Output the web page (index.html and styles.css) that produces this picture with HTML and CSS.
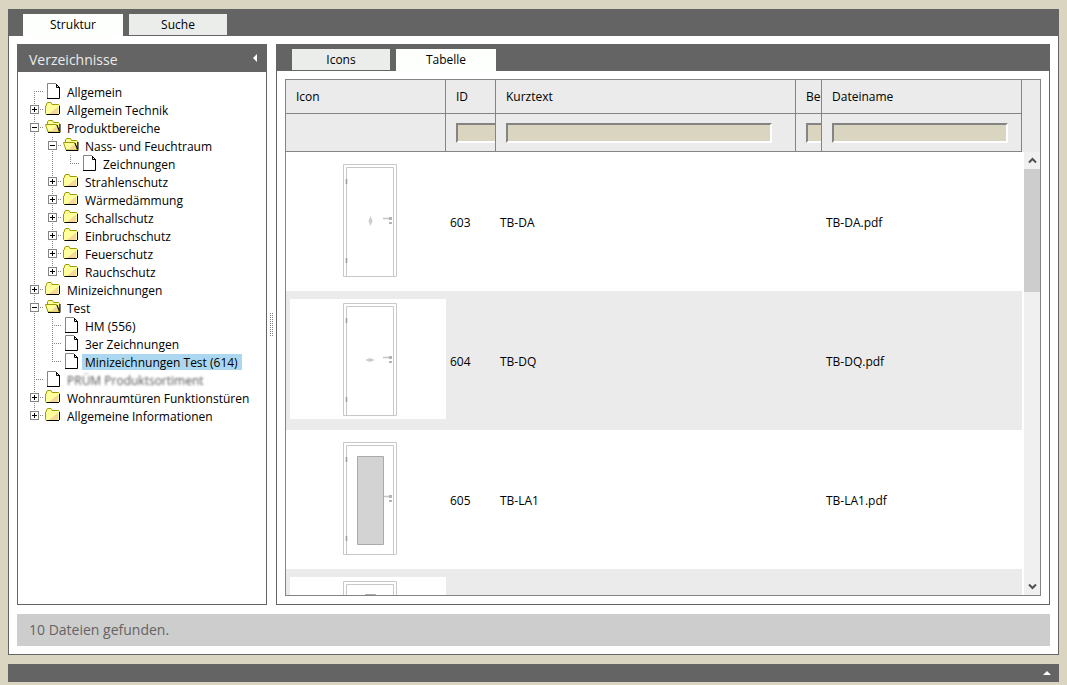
FILE: index.html
```
<!DOCTYPE html>
<html lang="de">
<head>
<meta charset="UTF-8">
<meta name="viewport" content="width=device-width, initial-scale=1.0">
<title>Verzeichnisse</title>
<link rel="stylesheet" href="styles.css">
</head>
<body>

<!-- shared drawings -->
<svg class="defs" aria-hidden="true">
  <symbol id="page" viewBox="0 0 18 18">
    <path d="M3.5 15.5V.5h8l4 4v11z" fill="#fff"/>
    <path d="M3.5 15V.5H12" fill="none" stroke="#848484"/>
    <path d="M3 15.5h12.500V4M12.500 1v3.500H15M12.500 1.500l3 3" fill="none" stroke="#000"/>
  </symbol>
  <symbol id="folder" viewBox="0 0 18 18">
    <path d="M1.500 5l1-.5V3l1-1.500h3.500L8 3v.5h6.500l1 1v8l-1 1h-12l-1-1z" fill="#ffff9c" stroke="#9c9c00"/>
    <path d="M14 5.500V12l-1 1H5z" fill="#f7d69c"/>
    <path d="M2.500 13.500H15M15.500 5v8" fill="none" stroke="#000"/>
  </symbol>
  <symbol id="folder-open" viewBox="0 0 18 18">
    <path d="M3.500 6V3l1-1.500h4l1 2h5l1 1v8" fill="#ffff9c" stroke="#9c9c00"/>
    <path d="M1.500 5.500h11l2.500 7.500H4z" fill="#ffff9c" stroke="#9c9c00"/>
    <path d="M12 7l2 5.500H7z" fill="#f7d69c"/>
    <path d="M4 13.500h12V5M13 6l2.500 6" fill="none" stroke="#000"/>
  </symbol>
  <symbol id="door" viewBox="0 0 156 120">
    <path d="M53.500 116.500V4.500h53v112z" fill="#fff" stroke="#c8c8c8"/>
    <path d="M56.500 116.500V7.500h47v109" fill="none" stroke="#c8c8c8"/>
    <path d="M56.500 19v5M56.500 98v5" stroke="#999" stroke-width="1.500"/>
    <path d="M93 58.500h8" stroke="#c4c4c4" stroke-width="1.500"/>
    <path d="M99 57h3v3h-3zM99 62h3v2h-3z" fill="#b4b4b4"/>
  </symbol>
</svg>

<main class="window">
  <div class="tabs">
    <button class="tab active">Struktur</button>
    <button class="tab">Suche</button>
  </div>

  <div class="content">
    <div class="columns">
      <section class="panel sidebar">
        <div class="panel-title">
          <h2>Verzeichnisse</h2>
          <button class="collapse" aria-label="Einklappen"><svg width="4" height="8" viewBox="0 0 4 8"><path d="M4 0v8L0 4z" fill="#fff"/></svg></button>
        </div>
        <ul class="tree">
          <li><div class="row"><span class="branch"></span><svg class="icon"><use href="#page"/></svg><a href="#">Allgemein</a></div></li>
          <li><div class="row"><span class="branch"><button class="toggle plus" aria-label="Öffnen"></button></span><svg class="icon"><use href="#folder"/></svg><a href="#">Allgemein Technik</a></div></li>
          <li><div class="row"><span class="branch"><button class="toggle" aria-label="Schließen"></button></span><svg class="icon"><use href="#folder-open"/></svg><a href="#">Produktbereiche</a></div>
            <ul>
              <li><div class="row"><span class="branch"><button class="toggle" aria-label="Schließen"></button></span><svg class="icon"><use href="#folder-open"/></svg><a href="#">Nass- und Feuchtraum</a></div>
                <ul>
                  <li><div class="row"><span class="branch"></span><svg class="icon"><use href="#page"/></svg><a href="#">Zeichnungen</a></div></li>
                </ul>
              </li>
              <li><div class="row"><span class="branch"><button class="toggle plus" aria-label="Öffnen"></button></span><svg class="icon"><use href="#folder"/></svg><a href="#">Strahlenschutz</a></div></li>
              <li><div class="row"><span class="branch"><button class="toggle plus" aria-label="Öffnen"></button></span><svg class="icon"><use href="#folder"/></svg><a href="#">Wärmedämmung</a></div></li>
              <li><div class="row"><span class="branch"><button class="toggle plus" aria-label="Öffnen"></button></span><svg class="icon"><use href="#folder"/></svg><a href="#">Schallschutz</a></div></li>
              <li><div class="row"><span class="branch"><button class="toggle plus" aria-label="Öffnen"></button></span><svg class="icon"><use href="#folder"/></svg><a href="#">Einbruchschutz</a></div></li>
              <li><div class="row"><span class="branch"><button class="toggle plus" aria-label="Öffnen"></button></span><svg class="icon"><use href="#folder"/></svg><a href="#">Feuerschutz</a></div></li>
              <li><div class="row"><span class="branch"><button class="toggle plus" aria-label="Öffnen"></button></span><svg class="icon"><use href="#folder"/></svg><a href="#">Rauchschutz</a></div></li>
            </ul>
          </li>
          <li><div class="row"><span class="branch"><button class="toggle plus" aria-label="Öffnen"></button></span><svg class="icon"><use href="#folder"/></svg><a href="#">Minizeichnungen</a></div></li>
          <li><div class="row"><span class="branch"><button class="toggle" aria-label="Schließen"></button></span><svg class="icon"><use href="#folder-open"/></svg><a href="#">Test</a></div>
            <ul>
              <li><div class="row"><span class="branch"></span><svg class="icon"><use href="#page"/></svg><a href="#">HM (556)</a></div></li>
              <li><div class="row"><span class="branch"></span><svg class="icon"><use href="#page"/></svg><a href="#">3er Zeichnungen</a></div></li>
              <li><div class="row"><span class="branch"></span><svg class="icon"><use href="#page"/></svg><a href="#" class="selected">Minizeichnungen Test (614)</a></div></li>
            </ul>
          </li>
          <li><div class="row"><span class="branch"></span><svg class="icon"><use href="#page"/></svg><a href="#" class="blurred">PRÜM Produktsortiment</a></div></li>
          <li><div class="row"><span class="branch"><button class="toggle plus" aria-label="Öffnen"></button></span><svg class="icon"><use href="#folder"/></svg><a href="#">Wohnraumtüren Funktionstüren</a></div></li>
          <li><div class="row"><span class="branch"><button class="toggle plus" aria-label="Öffnen"></button></span><svg class="icon"><use href="#folder"/></svg><a href="#">Allgemeine Informationen</a></div></li>
        </ul>
      </section>

      <div class="splitter"><span class="grip"></span></div>

      <section class="panel files">
        <div class="tabs">
          <button class="tab">Icons</button>
          <button class="tab active">Tabelle</button>
        </div>
        <div class="grid">
          <div class="grid-view">
            <table>
              <colgroup>
                <col class="col-icon"><col class="col-id"><col><col class="col-desc"><col class="col-file">
              </colgroup>
              <thead>
                <tr class="titles">
                  <th>Icon</th>
                  <th>ID</th>
                  <th>Kurztext</th>
                  <th>Bes</th>
                  <th>Dateiname</th>
                </tr>
                <tr class="filters">
                  <th></th>
                  <th><input type="text" aria-label="ID"></th>
                  <th><input type="text" aria-label="Kurztext"></th>
                  <th><input type="text" aria-label="Beschreibung"></th>
                  <th><input type="text" class="wide" aria-label="Dateiname"></th>
                </tr>
              </thead>
              <tbody>
                <tr>
                  <td class="preview"><svg viewBox="0 0 156 120"><use href="#door"/><path d="M80.500 56l2 5-2 5-2-5z" fill="#ccc"/></svg></td>
                  <td>603</td><td>TB-DA</td><td></td><td>TB-DA.pdf</td>
                </tr>
                <tr>
                  <td class="preview"><svg viewBox="0 0 156 120"><use href="#door"/><path d="M75 61l5-2 5 2-5 2z" fill="#ccc"/></svg></td>
                  <td>604</td><td>TB-DQ</td><td></td><td>TB-DQ.pdf</td>
                </tr>
                <tr>
                  <td class="preview"><svg viewBox="0 0 156 120"><use href="#door"/><path d="M67.500 18.500h26v88h-26z" fill="#d3d3d3" stroke="#aaa"/></svg></td>
                  <td>605</td><td>TB-LA1</td><td></td><td>TB-LA1.pdf</td>
                </tr>
                <tr>
                  <td class="preview"><svg viewBox="0 0 156 120"><use href="#door"/><path d="M75.500 17.500h10v88h-10z" fill="#d3d3d3" stroke="#aaa"/></svg></td>
                  <td></td><td></td><td></td><td></td>
                </tr>
              </tbody>
            </table>
          </div>
          <div class="grid-side">
            <div class="corner"></div>
            <div class="scrollbar">
              <button aria-label="Nach oben"><svg width="9" height="7" viewBox="0 0 9 7"><path d="M1 5.500L4.500 2 8 5.500" fill="none" stroke="#505050" stroke-width="2"/></svg></button>
              <div class="track"><div class="thumb"></div></div>
              <button aria-label="Nach unten"><svg width="9" height="7" viewBox="0 0 9 7"><path d="M1 1.500L4.500 5 8 1.500" fill="none" stroke="#505050" stroke-width="2"/></svg></button>
            </div>
          </div>
        </div>
      </section>
    </div>

    <div class="status">10 Dateien gefunden.</div>
  </div>
</main>

<footer class="footer">
  <button class="collapse" aria-label="Ausklappen"><svg width="8" height="4" viewBox="0 0 8 4"><path d="M0 4h8L4 0z" fill="#fff"/></svg></button>
</footer>

</body>
</html>
```

FILE: styles.css
```
* {
    box-sizing: border-box;
}
body {
    display: flex;
    flex-direction: column;
    gap: 9px;
    height: 100vh;
    margin: 0;
    padding: 9px 8px 3px;
    background-color: #d9d5c1;
    color: #000;
    font-family: "Open Sans", "Noto Sans", sans-serif;
    font-size: 12px;
    line-height: 18px;
}
button {
    border: none;
    padding: 0;
    background: none;
    color: inherit;
    font: inherit;
    cursor: pointer;
}
ul {
    list-style: none;
    margin: 0;
    padding: 0;
}
.defs {
    display: none;
}

/* frame */
.window {
    display: flex;
    flex-direction: column;
    flex: 1;
    min-height: 0;
    background-color: #fff;
    border: 1px solid #646464;
    border-top: none;
}
.content {
    display: flex;
    flex-direction: column;
    flex: 1;
    gap: 9px;
    min-height: 0;
    padding: 8px;
}
.columns {
    display: flex;
    flex: 1;
    min-height: 0;
}
.panel {
    display: flex;
    flex-direction: column;
    border: 1px solid #646464;
    border-top: none;
}
.sidebar {
    width: 250px;
}
.files {
    flex: 1;
    min-width: 0;
}

/* tabs */
.tabs {
    display: flex;
    gap: 5px;
    height: 27px;
    padding: 5px 14px 0;
    background-color: #646464;
}
.tab {
    width: 98px;
    height: 21px;
    margin: 0 1px;
    background-color: #ebedeb;
}
.tab.active {
    width: 100px;
    height: 22px;
    margin: 0;
    background-color: #fdfffd;
}

/* directory tree */
.panel-title {
    display: flex;
    justify-content: space-between;
    align-items: center;
    height: 28px;
    padding: 0 9px 0 11px;
    background-color: #646464;
    color: #ebebeb;
}
.panel-title h2 {
    margin: 0;
    padding-top: 4px;
    font-size: 14px;
    font-weight: normal;
}
.collapse {
    display: flex;
}
.tree {
    padding: 11px 8px;
}
.tree li {
    background: repeating-linear-gradient(#848484 0 1px, transparent 1px 2px) 8px 0 / 1px 100% no-repeat;
}
.tree > li:first-child {
    background-position: 8px 8px;
}
.tree li:last-child {
    background-size: 1px 9px;
}
.tree ul {
    margin-left: 18px;
}
.row {
    display: flex;
    height: 18px;
}
.branch {
    width: 18px;
    height: 18px;
    padding: 4px;
    background: repeating-linear-gradient(90deg, #848484 0 1px, transparent 1px 2px) 8px 8px / 10px 1px no-repeat;
}
.toggle {
    display: block;
    width: 9px;
    height: 9px;
    border: 1px solid #848484;
    background: linear-gradient(#000, #000) center / 5px 1px no-repeat #fff;
}
.toggle.plus {
    background: linear-gradient(#000, #000) center / 5px 1px no-repeat,
                linear-gradient(#000, #000) center / 1px 5px no-repeat #fff;
}
.icon {
    width: 18px;
    height: 18px;
    margin-right: 2px;
}
.row a {
    height: 16px;
    margin-top: 1px;
    padding: 0 4px 0 3px;
    color: #000;
    line-height: 17px;
    text-decoration: none;
    white-space: nowrap;
}
.row .selected {
    background-color: #abd8f0;
}
.row .blurred {
    filter: blur(1px);
    opacity: 0.7;
}

.splitter {
    display: flex;
    justify-content: center;
    align-items: center;
    width: 9px;
    cursor: col-resize;
}
.grip {
    width: 3px;
    height: 23px;
    background: repeating-linear-gradient(transparent 0 1px, #fff 1px 2px),
                repeating-linear-gradient(90deg, #848484 0 1px, #fff 1px 2px);
}

/* file table */
.grid {
    display: flex;
    flex: 1;
    min-height: 0;
    margin: 8px;
    border: 1px solid #848484;
}
.grid-view {
    flex: 1;
    min-width: 0;
    overflow: hidden;
}
table {
    width: 100%;
    table-layout: fixed;
    border-collapse: separate;
    border-spacing: 0;
}
.col-icon {
    width: 160px;
}
.col-id {
    width: 50px;
}
.col-desc {
    width: 26px;
}
.col-file {
    width: 200px;
}
th {
    height: 38px;
    padding: 0 0 0 10px;
    border-right: 1px solid #848484;
    border-bottom: 1px solid #848484;
    background-color: #ebebeb;
    font-weight: normal;
    text-align: left;
    white-space: nowrap;
    overflow: hidden;
}
.titles th {
    height: 34px;
}
th input {
    display: block;
    width: calc(100% - 23px);
    min-width: 60px;
    height: 20px;
    padding: 0 2px;
    border: 2px solid;
    border-color: #848484 #fff #fff #848484;
    background-color: #d9d5c1;
    font: inherit;
}
th input.wide {
    width: calc(100% - 13px);
}
td {
    height: 139px;
    padding: 2px 4px 0;
}
td.preview {
    padding: 8px 0 11px 4px;
}
.preview svg {
    display: block;
    width: 156px;
    height: 120px;
    background-color: #fff;
}
tbody tr:nth-child(even) {
    background-color: #ebebeb;
}

.grid-side {
    display: flex;
    flex-direction: column;
    width: 18px;
}
.corner {
    height: 72px;
    background-color: #ebebeb;
}
.scrollbar {
    display: flex;
    flex-direction: column;
    flex: 1;
    margin-left: 2px;
    background-color: #f0f0f0;
}
.scrollbar button {
    display: flex;
    justify-content: center;
    align-items: center;
    height: 17px;
}
.track {
    flex: 1;
}
.thumb {
    height: 30%;
    background-color: #cdcdcd;
}

.status {
    height: 32px;
    padding: 0 12px;
    background-color: #cdcdcd;
    color: #646464;
    font-size: 14px;
    line-height: 32px;
}
.footer {
    display: flex;
    justify-content: flex-end;
    align-items: center;
    height: 18px;
    padding-right: 8px;
    background-color: #646464;
}
```
